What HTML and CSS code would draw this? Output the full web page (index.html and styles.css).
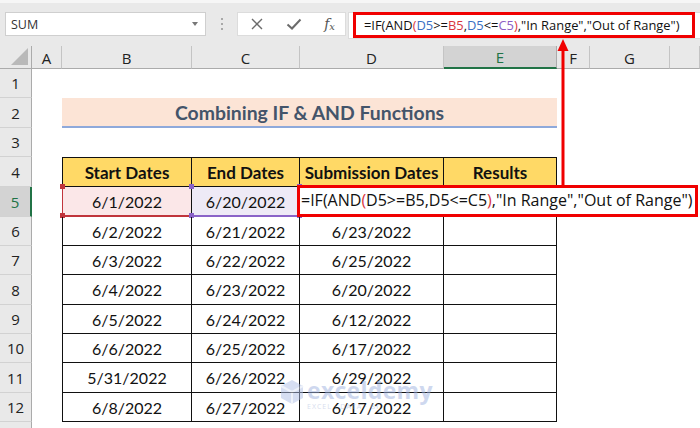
FILE: index.html
```html
<!DOCTYPE html>
<html>
<head>
<meta charset="utf-8">
<link rel="stylesheet" href="styles.css">
</head>
<body>
<div class="app">
  <div class="toolbar">
    <div class="namebox"><span class="nb-text">SUM</span><span class="caret"></span></div>
    <div class="grip"><i></i><i></i><i></i></div>
    <div class="btns">
      <svg class="ico" width="14" height="14" viewBox="0 0 14 14"><path d="M2 2 L12 12 M12 2 L2 12" stroke="#6b6b6b" stroke-width="1.4" fill="none"/></svg>
      <svg class="ico" width="16" height="14" viewBox="0 0 16 14"><path d="M1.5 7.5 L6 11.5 L14.5 2.5" stroke="#6b6b6b" stroke-width="2" fill="none"/></svg>
      <span class="fx">f<sub>x</sub></span>
    </div>
    <div class="fbar">
      <div class="fbox">=IF(AND<span class="pr">(</span><span class="rb">D5</span>&gt;=<span class="rr">B5</span>,<span class="rb">D5</span>&lt;=<span class="rp">C5</span><span class="pr">)</span>,"In Range","Out of Range")</div>
    </div>
  </div>

  <div class="sheet">
    <div class="corner"><span class="tri"></span></div>
    <div class="ch">A</div><div class="ch">B</div><div class="ch">C</div><div class="ch">D</div><div class="ch sel">E</div><div class="ch">F</div><div class="ch">G</div><div class="ch"></div>

    <div class="rh">1</div><div></div><div></div><div></div><div></div><div></div><div></div><div></div><div></div>

    <div class="rh">2</div><div></div><div class="title">Combining IF &amp; AND Functions</div><div></div><div></div><div></div>

    <div class="rh">3</div><div></div><div></div><div></div><div></div><div></div><div></div><div></div><div></div>

    <div class="rh">4</div><div></div><div class="c hd first">Start Dates</div><div class="c hd">End Dates</div><div class="c hd">Submission Dates</div><div class="c hd">Results</div><div></div><div></div><div></div>

    <div class="rh sel">5</div><div></div><div class="c first refb">6/1/2022<i class="dot tl"></i><i class="dot bl"></i></div><div class="c refc">6/20/2022<i class="dot tl"></i><i class="dot bl"></i><i class="dot tr"></i><i class="dot br"></i></div><div class="c"></div><div class="c"></div><div></div><div></div><div></div>

    <div class="rh">6</div><div></div><div class="c first">6/2/2022</div><div class="c">6/21/2022</div><div class="c">6/23/2022</div><div class="c"></div><div></div><div></div><div></div>
    <div class="rh">7</div><div></div><div class="c first">6/3/2022</div><div class="c">6/22/2022</div><div class="c">6/25/2022</div><div class="c"></div><div></div><div></div><div></div>
    <div class="rh">8</div><div></div><div class="c first">6/4/2022</div><div class="c">6/23/2022</div><div class="c">6/20/2022</div><div class="c"></div><div></div><div></div><div></div>
    <div class="rh">9</div><div></div><div class="c first">6/5/2022</div><div class="c">6/24/2022</div><div class="c">6/12/2022</div><div class="c"></div><div></div><div></div><div></div>
    <div class="rh">10</div><div></div><div class="c first">6/6/2022</div><div class="c">6/25/2022</div><div class="c">6/17/2022</div><div class="c"></div><div></div><div></div><div></div>
    <div class="rh">11</div><div></div><div class="c first">5/31/2022</div><div class="c">6/26/2022</div><div class="c">6/29/2022</div><div class="c"></div><div></div><div></div><div></div>
    <div class="rh">12</div><div></div><div class="c first">6/8/2022</div><div class="c">6/27/2022</div><div class="c">6/17/2022</div><div class="c"></div><div></div><div></div><div></div>
    <div class="rh"></div>
  </div>

  <div class="editcell">=IF(AND<span class="pr">(</span>D5&gt;=B5,D5&lt;=C5<span class="pr">)</span>,"In Range","Out of Range")</div>

  <svg class="arrow" width="20" height="150" viewBox="0 0 20 150">
    <path d="M10 10 L10 148" stroke="#f00000" stroke-width="3" fill="none"/>
    <path d="M10 0 L4.5 12 L15.5 12 Z" fill="#f00000"/>
  </svg>

  <div class="watermark">
    <svg width="24" height="26" viewBox="0 0 24 26"><path d="M12 1 L23 7 L23 19 L12 25 L1 19 L1 7 Z" fill="#aebfe6"/><path d="M12 13 L23 7 M12 13 L1 7 M12 13 L12 25" stroke="#dfe6f6" stroke-width="2"/></svg>
    <div class="wm-text"><span class="wm-big">exceldemy</span><span class="wm-small">EXCEL · DATA · BI</span></div>
  </div>
</div>
</body>
</html>
```

FILE: styles.css
```css
* { box-sizing: border-box; }
html, body { margin: 0; padding: 0; }
body { width: 700px; height: 428px; overflow: hidden; background: #fff; font-family: "Lato", "Open Sans", sans-serif; }
.app { position: relative; width: 700px; height: 428px; overflow: hidden; }

.toolbar {
  height: 46px;
  background: #e9e9e9;
  border-top: 3px solid #f6f6f6;
  display: flex;
  align-items: flex-start;
  padding-top: 9px;
  padding-left: 5px;
}
.namebox {
  width: 201px; height: 24px;
  background: #fff; border: 1px solid #cfcfcf;
  display: flex; align-items: center; justify-content: space-between;
  padding: 0 7px 0 5px;
  font-family: "Open Sans", sans-serif; font-size: 12.5px; color: #333;
}
.caret { width: 0; height: 0; border-left: 3.5px solid transparent; border-right: 3.5px solid transparent; border-top: 4px solid #777; }
.grip { width: 31px; height: 24px; display: flex; flex-direction: column; align-items: center; justify-content: center; gap: 3px; }
.grip i { display: block; width: 2px; height: 2px; background: #a8a8a8; }
.btns {
  width: 109px; height: 24px; background: #fff; border: 1px solid #dcdcdc;
  display: flex; align-items: center; justify-content: space-between; padding: 0 10px 0 12px;
}
.fx { font-family: "DejaVu Serif", "Liberation Serif", serif; font-style: italic; font-size: 14px; color: #555; line-height: 1; }
.fx sub { font-size: 10px; vertical-align: -1px; }
.fbar { flex: 1; height: 27px; background: #fff; border: 1px solid #dcdcdc; border-right: none; margin-left: 2px; padding-left: 4px; }
.fbox {
  width: 342px; height: 26px; margin-top: -1px;
  border: 3px solid #f00000;
  font-family: "Open Sans", sans-serif; font-size: 12.9px; color: #111;
  padding-left: 8px; line-height: 20px; white-space: nowrap; overflow: hidden;
}
.rb { color: #3b6fc4; }
.rr { color: #d9363e; }
.rp { color: #8c5cc4; }
.pr { color: #d9363e; }

.sheet {
  display: grid;
  grid-template-columns: 32px 30px 130px 108px 144px 113px 33px 80px 30px;
  grid-template-rows: 23px 29px 30px 29px 30px 30px 29px 29px 30px 29px 29px 30px 29px 10px;
}
.corner { background: #e9e9e9; border-right: 1px solid #ababab; border-bottom: 1px solid #ababab; position: relative; }
.tri { position: absolute; right: 3px; bottom: 3px; width: 0; height: 0; border-left: 17px solid transparent; border-bottom: 17px solid #b9b9b9; }
.ch {
  background: #e9e9e9; border-right: 1px solid #c4c4c4; border-bottom: 1px solid #ababab;
  font-family: "Open Sans", sans-serif; font-size: 15px; color: #222;
  display: flex; align-items: center; justify-content: center; padding-top: 1px;
}
.ch.sel { background: #d3d3d3; color: #217346; border-bottom: 2px solid #217346; border-right-color: #ababab; }
.rh {
  background: #e9e9e9; border-right: 1px solid #ababab; border-bottom: 1px solid #d2d2d2;
  font-family: "Open Sans", sans-serif; font-size: 15px; color: #222;
  display: flex; align-items: center; justify-content: center;
}
.rh.sel { background: #d3d3d3; color: #217346; border-right: 2px solid #217346; }

.title {
  grid-column: span 4;
  background: #fce4d6;
  border-bottom: 2px solid #8ea9db;
  display: flex; align-items: center; justify-content: center;
  font-weight: 700; font-size: 19.4px; color: #44546a;
  padding-top: 1px;
}
.c {
  border-right: 1px solid #111; border-bottom: 1px solid #111;
  display: flex; align-items: center; justify-content: center;
  font-size: 16px; color: #111; position: relative;
}
.c.first { border-left: 1px solid #111; }
.c.hd { background: #ffd966; border-top: 1px solid #111; font-weight: 700; font-size: 17px; }
.refb { background: #fbe7e8; border-color: #111 #111 #c0353c #c0353c !important; border-bottom-width: 2px !important; }
.refc { background: #eeeaf6; border-bottom: 2px solid #8a63c8; }
.dot { position: absolute; width: 5px; height: 5px; }
.refb .dot { background: #c0353c; }
.refc .dot { background: #8a63c8; }
.dot.tl { left: -3px; top: -3px; }
.dot.bl { left: -3px; bottom: -3px; }
.dot.tr { right: -3px; top: -3px; }
.dot.br { right: -3px; bottom: -3px; }

.editcell {
  position: absolute; left: 297px; top: 185px; width: 401px; height: 32px;
  background: #fff; border: 3px solid #f00000;
  font-family: "Open Sans", sans-serif; font-size: 16px; color: #111; white-space: nowrap;
  padding-left: 1px; line-height: 25px; overflow: hidden;
}
.arrow { position: absolute; left: 553px; top: 39px; }

.watermark {
  position: absolute; left: 280px; top: 379px;
  display: flex; align-items: flex-start; gap: 3px; opacity: 0.5;
}
.wm-text { display: flex; flex-direction: column; line-height: 1; }
.wm-big { font-family: "Open Sans", sans-serif; font-weight: 700; font-size: 23px; color: #9fb2e0; letter-spacing: 0.3px; }
.wm-small { font-family: "Open Sans", sans-serif; font-size: 7px; color: #b0bde0; letter-spacing: 1px; margin-top: 1px; }
```
